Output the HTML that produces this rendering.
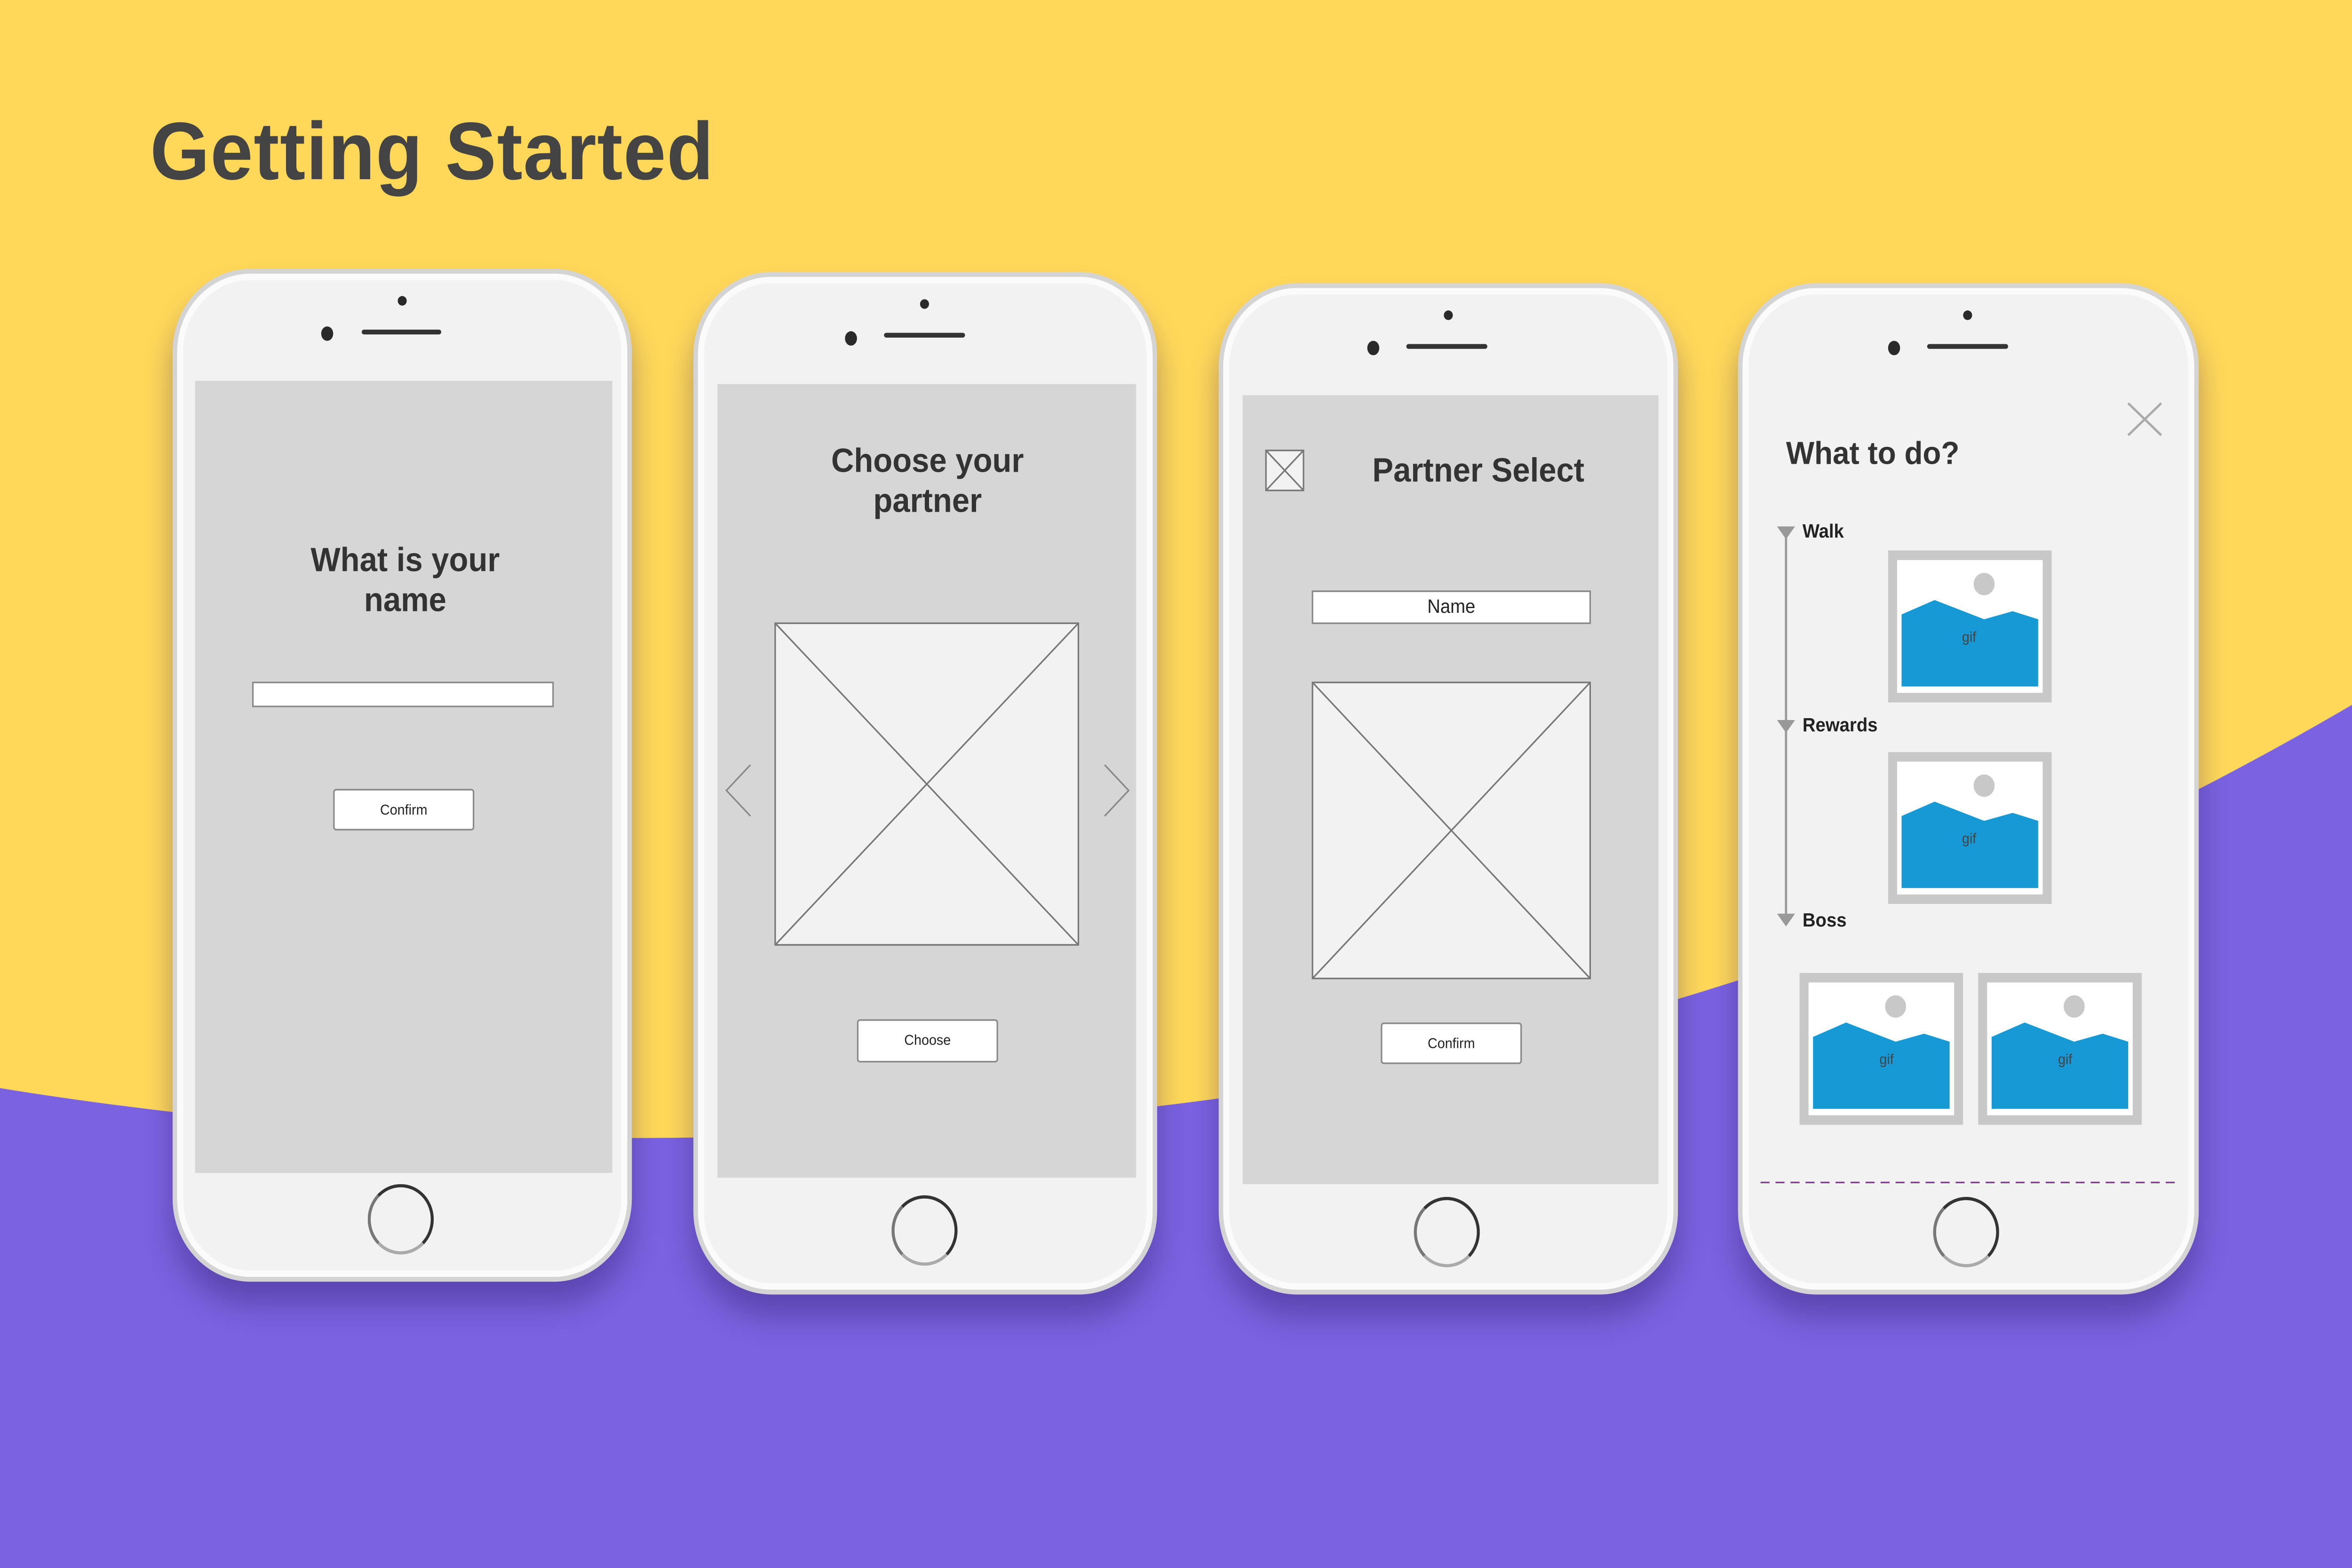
<!DOCTYPE html>
<html><head><meta charset="utf-8">
<style>
html,body{margin:0;padding:0;width:5333px;height:3333px;overflow:hidden;background:#FFD85A}
#w{position:absolute;left:0;top:0;width:1568px;height:980px;transform:scale(3.1906,3.4023);transform-origin:0 0;font-family:"Liberation Sans",Arial,sans-serif}
.a{position:absolute}
.phone{position:absolute;background:#f2f2f2;border:3px solid #d4d4d4;border-radius:52px;box-shadow:0 14px 18px rgba(40,20,90,0.35), inset 0 0 0 4px #fbfbfb;box-sizing:border-box}
.scr{position:absolute;background:#d6d6d6}
.dot{position:absolute;background:#2a2a2a;border-radius:50%}
.spk{position:absolute;height:3px;background:#333;border-radius:2px}
.home{position:absolute;width:44px;height:44px;border-radius:50%;border:2px solid #333;box-sizing:border-box;border-bottom-color:#aaa;border-left-color:#777}
.t{position:absolute;font-weight:bold;color:#333;text-align:center;font-size:21px;line-height:25px}
.btn{position:absolute;background:#fff;border:1px solid #888;border-radius:2px;font-size:9px;color:#222;text-align:center;box-sizing:border-box}
.lbl{position:absolute;font-weight:bold;font-size:12px;color:#222;line-height:14px}
</style></head><body>
<div id="w">
<svg class="a" style="left:0;top:0" width="1568" height="980"><path d="M0 680 C 250 718, 520 722, 800 688 C 1100 650, 1350 560, 1568 440 L1568 980 L0 980 Z" fill="#7A62E0"/></svg>
<div class="a" style="left:100px;top:64px;font-size:51px;font-weight:bold;color:#444;letter-spacing:0.5px;line-height:62px">Getting Started</div>

<!-- phone 1 -->
<div class="phone" style="left:115px;top:168px;width:306px;height:633px"></div>
<div class="scr" style="left:130px;top:238px;width:278px;height:495px"></div>
<div class="dot" style="left:265px;top:185px;width:6px;height:6px"></div>
<div class="dot" style="left:214px;top:204px;width:8px;height:9px"></div>
<div class="spk" style="left:241px;top:206px;width:53px"></div>
<div class="home" style="left:245px;top:740px"></div>
<div class="t" style="left:130px;top:338px;width:280px">What is your<br>name</div>
<div class="a" style="left:168px;top:426px;width:201px;height:16px;background:#fff;border:1px solid #888;box-sizing:border-box"></div>
<div class="btn" style="left:222px;top:493px;width:94px;height:26px;line-height:24px">Confirm</div>

<!-- phone 2 -->
<div class="phone" style="left:462px;top:170px;width:309px;height:639px"></div>
<div class="scr" style="left:478px;top:240px;width:279px;height:496px"></div>
<div class="dot" style="left:613px;top:187px;width:6px;height:6px"></div>
<div class="dot" style="left:563px;top:207px;width:8px;height:9px"></div>
<div class="spk" style="left:589px;top:208px;width:54px"></div>
<div class="home" style="left:594px;top:747px"></div>
<div class="t" style="left:478px;top:276px;width:280px">Choose your<br>partner</div>
<svg class="a" style="left:480px;top:380px" width="280" height="220">
<rect x="36.5" y="9.5" width="202" height="201" fill="#f2f2f2" stroke="#777"/>
<line x1="36.5" y1="9.5" x2="238.5" y2="210.5" stroke="#777"/><line x1="238.5" y1="9.5" x2="36.5" y2="210.5" stroke="#777"/>
<polyline points="20,98 4,114 20,130" fill="none" stroke="#888"/>
<polyline points="256,98 272,114 256,130" fill="none" stroke="#888"/></svg>
<div class="btn" style="left:571px;top:637px;width:94px;height:27px;line-height:25px">Choose</div>

<!-- phone 3 -->
<div class="phone" style="left:812px;top:177px;width:306px;height:632px"></div>
<div class="scr" style="left:828px;top:247px;width:277px;height:493px"></div>
<div class="dot" style="left:962px;top:194px;width:6px;height:6px"></div>
<div class="dot" style="left:911px;top:213px;width:8px;height:9px"></div>
<div class="spk" style="left:937px;top:215px;width:54px"></div>
<div class="home" style="left:942px;top:748px"></div>
<svg class="a" style="left:842px;top:280px" width="28" height="28"><rect x="1.5" y="1.5" width="25" height="25" fill="#f2f2f2" stroke="#777"/><line x1="1.5" y1="1.5" x2="26.5" y2="26.5" stroke="#777"/><line x1="26.5" y1="1.5" x2="1.5" y2="26.5" stroke="#777"/></svg>
<div class="t" style="left:900px;top:282px;width:170px">Partner Select</div>
<div class="a" style="left:874px;top:369px;width:186px;height:21px;background:#fff;border:1px solid #888;box-sizing:border-box;font-size:12px;text-align:center;line-height:19px;color:#222">Name</div>
<svg class="a" style="left:873px;top:425px" width="188" height="188"><rect x="1.5" y="1.5" width="185" height="185" fill="#f2f2f2" stroke="#777"/><line x1="1.5" y1="1.5" x2="186.5" y2="186.5" stroke="#777"/><line x1="186.5" y1="1.5" x2="1.5" y2="186.5" stroke="#777"/></svg>
<div class="btn" style="left:920px;top:639px;width:94px;height:26px;line-height:24px">Confirm</div>

<!-- phone 4 -->
<div class="phone" style="left:1158px;top:177px;width:307px;height:632px"></div>
<div class="a" style="left:1173px;top:247px;width:279px;height:492px;background:#f2f2f2"></div>
<div class="dot" style="left:1308px;top:194px;width:6px;height:6px"></div>
<div class="dot" style="left:1258px;top:213px;width:8px;height:9px"></div>
<div class="spk" style="left:1284px;top:215px;width:54px"></div>
<div class="home" style="left:1288px;top:748px"></div>
<svg class="a" style="left:1173px;top:248px" width="280" height="495">
<line x1="245" y1="4" x2="267" y2="24" stroke="#aaa" stroke-width="1.5"/><line x1="267" y1="4" x2="245" y2="24" stroke="#aaa" stroke-width="1.5"/>
<line x1="17" y1="84" x2="17" y2="326" stroke="#999" stroke-width="1.5"/>
<polygon points="11,81 23,81 17,89" fill="#999"/><polygon points="11,202 23,202 17,210" fill="#999"/><polygon points="11,323 23,323 17,331" fill="#999"/>
<line x1="0" y1="491" x2="280" y2="491" stroke="#8a3a9a" stroke-dasharray="6,4" stroke-width="1"/></svg>
<div class="t" style="left:1190px;top:272px;text-align:left;font-size:20px">What to do?</div>
<div class="lbl" style="left:1201px;top:325px">Walk</div>
<div class="lbl" style="left:1201px;top:446px">Rewards</div>
<div class="lbl" style="left:1201px;top:568px">Boss</div>

<svg class="a" style="left:1258px;top:344px" width="109" height="95"><rect width="109" height="95" fill="#c8c8c8"/><rect x="6" y="6" width="97" height="83" fill="#fff"/><circle cx="64" cy="21" r="7" fill="#c8c8c8"/><polygon points="9,40 31,31 64,43 83,38 100,43 100,85 9,85" fill="#1799d5"/><text x="54" y="57" font-size="9" text-anchor="middle" fill="#444" font-family="Liberation Sans">gif</text></svg>
<svg class="a" style="left:1258px;top:470px" width="109" height="95"><rect width="109" height="95" fill="#c8c8c8"/><rect x="6" y="6" width="97" height="83" fill="#fff"/><circle cx="64" cy="21" r="7" fill="#c8c8c8"/><polygon points="9,40 31,31 64,43 83,38 100,43 100,85 9,85" fill="#1799d5"/><text x="54" y="57" font-size="9" text-anchor="middle" fill="#444" font-family="Liberation Sans">gif</text></svg>
<svg class="a" style="left:1199px;top:608px" width="109" height="95"><rect width="109" height="95" fill="#c8c8c8"/><rect x="6" y="6" width="97" height="83" fill="#fff"/><circle cx="64" cy="21" r="7" fill="#c8c8c8"/><polygon points="9,40 31,31 64,43 83,38 100,43 100,85 9,85" fill="#1799d5"/><text x="58" y="57" font-size="9" text-anchor="middle" fill="#444" font-family="Liberation Sans">gif</text></svg>
<svg class="a" style="left:1318px;top:608px" width="109" height="95"><rect width="109" height="95" fill="#c8c8c8"/><rect x="6" y="6" width="97" height="83" fill="#fff"/><circle cx="64" cy="21" r="7" fill="#c8c8c8"/><polygon points="9,40 31,31 64,43 83,38 100,43 100,85 9,85" fill="#1799d5"/><text x="58" y="57" font-size="9" text-anchor="middle" fill="#444" font-family="Liberation Sans">gif</text></svg>
</div>
</body></html>
